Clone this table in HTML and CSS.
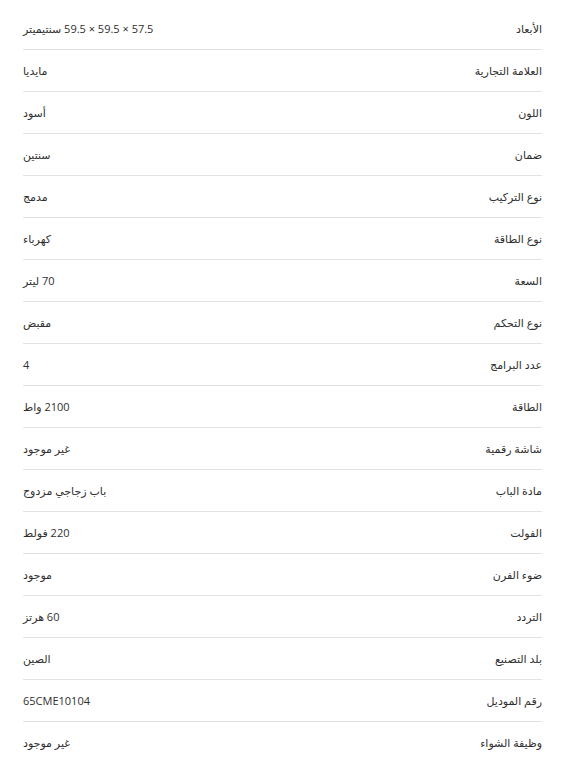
FILE: index.html
```html
<!DOCTYPE html>
<html lang="ar" dir="rtl">
<head>
<meta charset="utf-8">
<title>المواصفات</title>
<link rel="stylesheet" href="styles.css">
</head>
<body>
<div class="specs">
  <div class="row"><span class="label">الأبعاد</span><span class="value"><bdi dir="ltr">59.5 × 59.5 × 57.5</bdi> سنتيميتر</span></div>
  <div class="row"><span class="label">العلامة التجارية</span><span class="value">مايديا</span></div>
  <div class="row"><span class="label">اللون</span><span class="value">أسود</span></div>
  <div class="row"><span class="label">ضمان</span><span class="value">سنتين</span></div>
  <div class="row"><span class="label">نوع التركيب</span><span class="value">مدمج</span></div>
  <div class="row"><span class="label">نوع الطاقة</span><span class="value">كهرباء</span></div>
  <div class="row"><span class="label">السعة</span><span class="value">70 ليتر</span></div>
  <div class="row"><span class="label">نوع التحكم</span><span class="value">مقبض</span></div>
  <div class="row"><span class="label">عدد البرامج</span><span class="value">4</span></div>
  <div class="row"><span class="label">الطاقة</span><span class="value">2100 واط</span></div>
  <div class="row"><span class="label">شاشة رقمية</span><span class="value">غير موجود</span></div>
  <div class="row"><span class="label">مادة الباب</span><span class="value">باب زجاجي مزدوج</span></div>
  <div class="row"><span class="label">الفولت</span><span class="value">220 فولط</span></div>
  <div class="row"><span class="label">ضوء الفرن</span><span class="value">موجود</span></div>
  <div class="row"><span class="label">التردد</span><span class="value">60 هرتز</span></div>
  <div class="row"><span class="label">بلد التصنيع</span><span class="value">الصين</span></div>
  <div class="row"><span class="label">رقم الموديل</span><span class="value">65CME10104</span></div>
  <div class="row"><span class="label">وظيفة الشواء</span><span class="value">غير موجود</span></div>
</div>
</body>
</html>
```
FILE: styles.css
```css
html, body {
  margin: 0;
  background: #ffffff;
}
body {
  font-family: "Open Sans", "DejaVu Sans", sans-serif;
  font-size: 11px;
  color: #2f2f2f;
  padding: 8px 33px 0 23px;
}
.specs {
  display: flex;
  flex-direction: column;
}
.row {
  display: flex;
  justify-content: space-between;
  align-items: center;
  height: 41px;
  border-bottom: 1px solid #e3e3e3;
}
.row:last-child {
  border-bottom: none;
}
.label, .value {
  line-height: 16px;
}
```
